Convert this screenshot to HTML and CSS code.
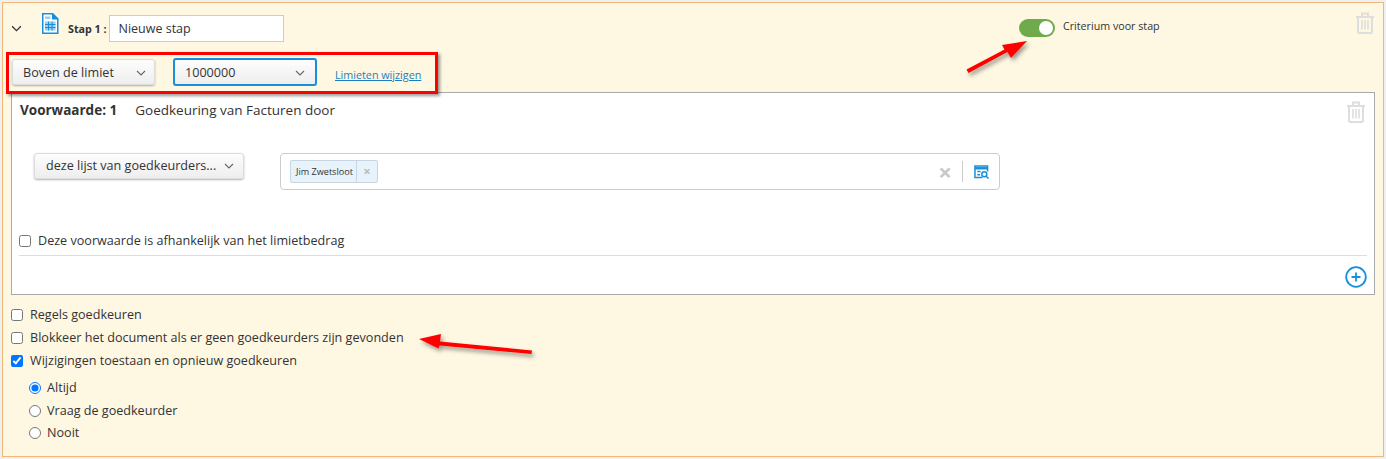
FILE: index.html
```html
<!DOCTYPE html>
<html lang="nl">
<head>
<meta charset="utf-8">
<title>Stap 1</title>
<link rel="stylesheet" href="styles.css">
</head>
<body>
<main class="panel">
  <header class="step-head">
    <svg class="chev-big" viewBox="0 0 12 8"><path d="M1 1.5 6 6.5 11 1.5"/></svg>
    <svg class="doc-icon" viewBox="0 0 18 22">
      <path class="doc-fill" d="M1 0.5H12L17.5 6V21.5H1Z"/>
      <path class="doc-paper" d="M2.5 2H11V7H16V20H2.5Z"/>
      <rect class="doc-blue" x="4" y="4" width="5.500" height="2.500"/>
      <rect class="doc-blue" x="4" y="9" width="10.500" height="9"/>
      <path class="doc-grid" d="M4 12H14.500M4 15H14.500M7.500 9V18M11 9V18"/>
    </svg>
    <span class="step-label">Stap 1 :</span>
    <input class="step-name" type="text" value="Nieuwe stap">
    <div class="crit">
      <span class="toggle"><span class="knob"></span></span>
      <span class="crit-label">Criterium voor stap</span>
    </div>
    <svg class="trash trash-top" viewBox="0 0 20 22"><use href="#trash-shape"/></svg>
  </header>

  <div class="limit-row">
    <div class="select sel-limit"><span>Boven de limiet</span><svg class="chev" viewBox="0 0 10 6"><path d="M1 1 5 5 9 1"/></svg></div>
    <div class="select sel-amount"><span>1000000</span><svg class="chev" viewBox="0 0 10 6"><path d="M1 1 5 5 9 1"/></svg></div>
    <a class="link" href="#">Limieten wijzigen</a>
  </div>

  <section class="cond">
    <div class="cond-title">
      <strong>Voorwaarde: 1</strong><span>Goedkeuring van Facturen door</span>
      <svg class="trash trash-cond" viewBox="0 0 20 22"><use href="#trash-shape"/></svg>
    </div>
    <div class="cond-body">
      <div class="select sel-list"><span>deze lijst van goedkeurders...</span><svg class="chev" viewBox="0 0 10 6"><path d="M1 1 5 5 9 1"/></svg></div>
      <div class="multi">
        <span class="tag"><span class="tag-text">Jim Zwetsloot</span><span class="tag-x">×</span></span>
        <span class="clear">×</span>
        <span class="multi-sep"></span>
        <svg class="lookup" viewBox="0 0 16 15">
          <path d="M9 13.500H1V1H14.500V7"/>
          <path d="M1 3.500H14.500" stroke-width="2.600"/>
          <path d="M3.500 7H7M3.500 10.500H6.500"/>
          <circle cx="11" cy="10" r="2.700"/>
          <path d="M13 12 15.500 14.500"/>
        </svg>
      </div>
    </div>
    <label class="check cond-check"><input type="checkbox"><span>Deze voorwaarde is afhankelijk van het limietbedrag</span></label>
    <div class="cond-foot">
      <svg class="plus" viewBox="0 0 22 22"><circle cx="11" cy="11" r="9.800"/><path d="M11 6.500V15.500M6.500 11H15.500"/></svg>
    </div>
  </section>

  <div class="options">
    <label class="check opt"><input type="checkbox"><span>Regels goedkeuren</span></label>
    <label class="check opt"><input type="checkbox"><span>Blokkeer het document als er geen goedkeurders zijn gevonden</span></label>
    <label class="check opt"><input type="checkbox" checked><span>Wijzigingen toestaan en opnieuw goedkeuren</span></label>
    <div class="radios">
      <label class="check"><input type="radio" name="r" checked><span>Altijd</span></label>
      <label class="check"><input type="radio" name="r"><span>Vraag de goedkeurder</span></label>
      <label class="check"><input type="radio" name="r"><span>Nooit</span></label>
    </div>
  </div>
</main>

<div class="red-box"></div>
<svg class="annot" viewBox="0 0 1386 459">
  <defs>
    <filter id="shadow" x="-20%" y="-40%" width="140%" height="200%"><feDropShadow dx="2" dy="3" stdDeviation="2" flood-color="#000" flood-opacity=".4"/></filter>
    <g id="trash-shape" fill="none" stroke="#dedede" stroke-width="2">
      <path d="M1 5H19M7 4.500V1.500H13V4.500M3 5.500V19.500Q3 21 4.500 21H15.500Q17 21 17 19.500V5.500"/>
      <path d="M7 8V17.500M10 8V17.500M13 8V17.500" stroke-width="1.600"/>
    </g>
  </defs>
  <polygon filter="url(#shadow)" class="arrow" points="1027,41 1011,58 1007.500,52 968.500,73 966.500,69.500 1004.500,49.500 1002,45"/>
  <polygon filter="url(#shadow)" class="arrow" points="419,339 441,334 440,341.500 532,350.500 531.500,354 439.500,345.500 438.500,348.500"/>
</svg>
</body>
</html>
```
FILE: styles.css
```css
* { box-sizing: border-box; }
html, body { margin: 0; height: 459px; overflow: hidden; }
body {
  background: #f0f0f0;
  padding: 2px;
  font-family: "Open Sans", "Liberation Sans", sans-serif;
  color: #333;
  font-size: 12.600px;
  position: relative;
}
.panel {
  width: 1382px;
  height: 455px;
  background: #fef7e2;
  border: 1px solid #f0b878;
  padding: 0 8px;
}
.step-head {
  height: 45px;
  display: flex;
  align-items: flex-start;
  position: relative;
}
.chev-big { width: 11px; height: 7px; margin: 22px 0 0 0; fill: none; stroke: #333; stroke-width: 1.500; flex: none; }
.doc-icon { width: 18px; height: 23px; margin: 9px 0 0 19px; flex: none; }
.doc-fill { fill: #1590dc; }
.doc-paper { fill: #fff; }
.doc-blue { fill: #9ccdf0; }
.doc-grid { fill: none; stroke: #1590dc; stroke-width: 1; }
.step-label { font-size: 10.700px; font-weight: 700; margin: 16px 0 0 9px; line-height: 20px; white-space: nowrap; }
.step-name {
  width: 175px; height: 27px; margin: 12px 0 0 3px;
  border: 1px solid #ccc; background: #fff; padding: 0 8px;
  font: 12.500px "Open Sans", sans-serif; color: #333; border-radius: 0; outline: 0;
}
.crit { position: absolute; left: 1008px; top: 16px; display: flex; gap: 8px; }
.toggle { width: 36px; height: 18px; border-radius: 9px; background: #70ab4b; position: relative; flex: none; }
.knob { position: absolute; right: 2px; top: 2px; width: 14px; height: 14px; border-radius: 50%; background: #fff; }
.crit-label { font-size: 10.700px; line-height: 15px; }
.trash { position: absolute; width: 20px; height: 22px; }
.trash-top { right: 0; top: 9px; }
.limit-row { height: 44px; display: flex; align-items: flex-start; padding-top: 11px; }
.select {
  display: flex; align-items: center; justify-content: space-between;
  background: linear-gradient(#fdfdfd, #eee);
  border: 1px solid #ddd; border-radius: 3px;
  box-shadow: 0 1px 2px rgba(0,0,0,.3);
  font-size: 12.600px; color: #333; white-space: nowrap;
}
.sel-limit { width: 143px; height: 26px; margin: 0 0 0 1px; padding: 0 8px 0 10px; }
.sel-amount { width: 144px; height: 28px; margin: -1px 0 0 18px; padding: 0 10px 0 10px; border: 2px solid #1a8ddb; box-shadow: none; }
.sel-list { width: 210px; height: 26px; padding: 0 9px 2px 11px; flex: none; }
.chev { width: 10px; height: 6px; fill: none; stroke: #666; stroke-width: 1.100; flex: none; margin-top: 2px; }
.link { margin: 9px 0 0 18px; font-size: 10.750px; line-height: 14px; color: #1a7fc0; }
.cond {
  width: 1364px; height: 203px;
  background: #fff;
  border: 1px solid #aaa;
  position: relative;
  padding: 0 7px;
}
.cond-title { height: 35px; padding: 8px 0 0 1px; font-size: 13.500px; line-height: 19px; white-space: nowrap; }
.cond-title strong { font-weight: 700; margin-right: 18px; }
.trash-cond { right: 8px; top: 8px; }
.cond-body { height: 104px; display: flex; align-items: flex-start; padding: 25px 0 0 15px; }
.multi {
  margin: 0 0 0 36px; width: 720px; height: 37px;
  border: 1px solid #ccc; border-radius: 4px;
  display: flex; align-items: center; padding: 0 10px 0 9px;
}
.tag {
  display: flex; align-items: center; height: 23px;
  background: #e8f2fb; border: 1px solid #c8d6e4; border-radius: 2px;
  font-size: 9.100px;
}
.tag-text { padding: 0 3px 0 5px; line-height: 21px; border-right: 1px solid #c8d6e4; }
.tag-x { width: 20px; text-align: center; color: #bbb; font-size: 13px; font-weight: 700; line-height: 21px; }
.clear { margin-left: auto; color: #c8c8c8; font-size: 24px; line-height: 20px; font-weight: 700; }
.multi-sep { width: 1px; height: 21px; background: #ccc; margin: 0 11px 0 10px; }
.lookup { width: 15px; height: 14px; fill: none; stroke: #1590dc; stroke-width: 1.600; flex: none; }
.check { display: flex; align-items: center; font-size: 12.600px; line-height: 18px; white-space: nowrap; }
.check input { margin: 0; width: 12px; height: 12px; flex: none; }
.check span { margin-left: 7px; }
.cond-check { height: 18px; margin-top: 0; }
.cond-foot { margin-top: 5px; height: 39px; border-top: 1px solid #ddd; display: flex; justify-content: flex-end; padding-top: 10px; }
.plus { width: 22px; height: 22px; fill: none; stroke: #1590dc; stroke-width: 1.800; }
.options { padding-top: 8px; }
.opt { height: 23px; }
.radios { padding: 5px 0 0 18px; }
.radios .check { height: 22.500px; }
.radios .check span { margin-left: 6px; }
.red-box {
  position: absolute; left: 6px; top: 52px; width: 432px; height: 42px;
  border: 3px solid #f00;
  box-shadow: 2px 2px 3px rgba(0,0,0,.4);
}
.annot { position: absolute; left: 0; top: 0; width: 1386px; height: 459px; pointer-events: none; }
.arrow { fill: #f00; }
```
